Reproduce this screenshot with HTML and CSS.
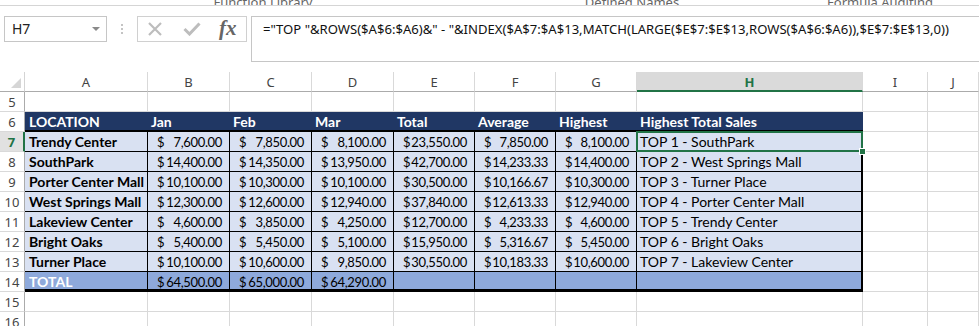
FILE: index.html
```html
<!DOCTYPE html>
<html lang="en">
<head>
    <meta charset="UTF-8">
    <title>Highest Total Sales</title>
    <link rel="stylesheet" href="styles.css">
</head>
<body>

    <!-- Ribbon group labels (cut off at the top) -->
    <div class="ribbon">
        <span class="group g1">Function Library</span>
        <span class="group g2">Defined Names</span>
        <span class="group g3">Formula Auditing</span>
    </div>

    <!-- Formula bar -->
    <div class="formula-bar">
        <div class="name-box">H7<span class="arrow"></span></div>
        <div class="grip"></div>
        <div class="fn-box">
            <svg class="ico" width="16" height="16" viewBox="0 0 16 16"><path d="M2 2L14 14M14 2L2 14" stroke="#bdbdbd" stroke-width="2.2" fill="none"/></svg>
            <svg class="ico" width="18" height="14" viewBox="0 0 18 14"><path d="M1.5 7L6.5 12L16.5 1.5" stroke="#bdbdbd" stroke-width="3" fill="none"/></svg>
            <span class="fx">fx</span>
        </div>
        <div class="formula">="TOP "&amp;ROWS($A$6:$A6)&amp;" - "&amp;INDEX($A$7:$A$13,MATCH(LARGE($E$7:$E$13,ROWS($A$6:$A6)),$E$7:$E$13,0))</div>
    </div>

    <!-- Worksheet -->
    <div class="sheet">
        <div class="corner"><span class="tri"></span></div>
        <div class="ch">A</div><div class="ch">B</div><div class="ch">C</div><div class="ch">D</div><div class="ch">E</div>
        <div class="ch">F</div><div class="ch">G</div><div class="ch act">H</div><div class="ch">I</div><div class="ch">J</div>

        <div class="rh">5</div>
        <div class="c"></div><div class="c"></div><div class="c"></div><div class="c"></div><div class="c"></div>
        <div class="c"></div><div class="c"></div><div class="c"></div><div class="c"></div><div class="c"></div>

        <div class="rh">6</div>
        <div class="hd first">LOCATION</div><div class="hd">Jan</div><div class="hd">Feb</div><div class="hd">Mar</div>
        <div class="hd">Total</div><div class="hd">Average</div><div class="hd">Highest</div>
        <div class="hd">Highest Total Sales</div><div class="c"></div><div class="c"></div>

        <div class="rh act">7</div>
        <div class="bd lb">Trendy Center</div>
        <div class="bd nm"><span>$</span><span>7,600.00</span></div>
        <div class="bd nm"><span>$</span><span>7,850.00</span></div>
        <div class="bd nm"><span>$</span><span>8,100.00</span></div>
        <div class="bd nm"><span>$</span><span>23,550.00</span></div>
        <div class="bd nm"><span>$</span><span>7,850.00</span></div>
        <div class="bd nm"><span>$</span><span>8,100.00</span></div>
        <div class="bd top sel">TOP 1 - SouthPark</div>
        <div class="c"></div><div class="c"></div>

        <div class="rh">8</div>
        <div class="bd lb">SouthPark</div>
        <div class="bd nm"><span>$</span><span>14,400.00</span></div>
        <div class="bd nm"><span>$</span><span>14,350.00</span></div>
        <div class="bd nm"><span>$</span><span>13,950.00</span></div>
        <div class="bd nm"><span>$</span><span>42,700.00</span></div>
        <div class="bd nm"><span>$</span><span>14,233.33</span></div>
        <div class="bd nm"><span>$</span><span>14,400.00</span></div>
        <div class="bd top">TOP 2 - West Springs Mall</div>
        <div class="c"></div><div class="c"></div>

        <div class="rh">9</div>
        <div class="bd lb">Porter Center Mall</div>
        <div class="bd nm"><span>$</span><span>10,100.00</span></div>
        <div class="bd nm"><span>$</span><span>10,300.00</span></div>
        <div class="bd nm"><span>$</span><span>10,100.00</span></div>
        <div class="bd nm"><span>$</span><span>30,500.00</span></div>
        <div class="bd nm"><span>$</span><span>10,166.67</span></div>
        <div class="bd nm"><span>$</span><span>10,300.00</span></div>
        <div class="bd top">TOP 3 - Turner Place</div>
        <div class="c"></div><div class="c"></div>

        <div class="rh">10</div>
        <div class="bd lb">West Springs Mall</div>
        <div class="bd nm"><span>$</span><span>12,300.00</span></div>
        <div class="bd nm"><span>$</span><span>12,600.00</span></div>
        <div class="bd nm"><span>$</span><span>12,940.00</span></div>
        <div class="bd nm"><span>$</span><span>37,840.00</span></div>
        <div class="bd nm"><span>$</span><span>12,613.33</span></div>
        <div class="bd nm"><span>$</span><span>12,940.00</span></div>
        <div class="bd top">TOP 4 - Porter Center Mall</div>
        <div class="c"></div><div class="c"></div>

        <div class="rh">11</div>
        <div class="bd lb">Lakeview Center</div>
        <div class="bd nm"><span>$</span><span>4,600.00</span></div>
        <div class="bd nm"><span>$</span><span>3,850.00</span></div>
        <div class="bd nm"><span>$</span><span>4,250.00</span></div>
        <div class="bd nm"><span>$</span><span>12,700.00</span></div>
        <div class="bd nm"><span>$</span><span>4,233.33</span></div>
        <div class="bd nm"><span>$</span><span>4,600.00</span></div>
        <div class="bd top">TOP 5 - Trendy Center</div>
        <div class="c"></div><div class="c"></div>

        <div class="rh">12</div>
        <div class="bd lb">Bright Oaks</div>
        <div class="bd nm"><span>$</span><span>5,400.00</span></div>
        <div class="bd nm"><span>$</span><span>5,450.00</span></div>
        <div class="bd nm"><span>$</span><span>5,100.00</span></div>
        <div class="bd nm"><span>$</span><span>15,950.00</span></div>
        <div class="bd nm"><span>$</span><span>5,316.67</span></div>
        <div class="bd nm"><span>$</span><span>5,450.00</span></div>
        <div class="bd top">TOP 6 - Bright Oaks</div>
        <div class="c"></div><div class="c"></div>

        <div class="rh">13</div>
        <div class="bd lb">Turner Place</div>
        <div class="bd nm"><span>$</span><span>10,100.00</span></div>
        <div class="bd nm"><span>$</span><span>10,600.00</span></div>
        <div class="bd nm"><span>$</span><span>9,850.00</span></div>
        <div class="bd nm"><span>$</span><span>30,550.00</span></div>
        <div class="bd nm"><span>$</span><span>10,183.33</span></div>
        <div class="bd nm"><span>$</span><span>10,600.00</span></div>
        <div class="bd top">TOP 7 - Lakeview Center</div>
        <div class="c"></div><div class="c"></div>

        <div class="rh">14</div>
        <div class="bd tt lb">TOTAL</div>
        <div class="bd tt nm"><span>$</span><span>64,500.00</span></div>
        <div class="bd tt nm"><span>$</span><span>65,000.00</span></div>
        <div class="bd tt nm"><span>$</span><span>64,290.00</span></div>
        <div class="bd tt"></div>
        <div class="bd tt"></div>
        <div class="bd tt"></div>
        <div class="bd tt top"></div>
        <div class="c"></div><div class="c"></div>

        <div class="rh">15</div>
        <div class="c"></div><div class="c"></div><div class="c"></div><div class="c"></div><div class="c"></div>
        <div class="c"></div><div class="c"></div><div class="c"></div><div class="c"></div><div class="c"></div>

        <div class="rh">16</div>
        <div class="c"></div><div class="c"></div><div class="c"></div><div class="c"></div><div class="c"></div>
        <div class="c"></div><div class="c"></div><div class="c"></div><div class="c"></div><div class="c"></div>
    </div>

</body>
</html>
```

FILE: styles.css
```css
body {
    margin: 0;
    background-color: #fff;
    font-family: "Noto Sans", Arial, sans-serif;
    overflow: hidden;
}
/* Ribbon */
.ribbon {
    height: 5px;
    overflow: hidden;
    border-bottom: 1px solid #d5d5d5;
    display: flex;
    align-items: flex-end;
    font-size: 13px;
    color: #666;
}
.group {
    width: 126px;
    text-align: center;
    line-height: 12px;
    margin-bottom: -3px;
    white-space: nowrap;
}
.g1 { margin-left: 200px; }
.g2 { margin-left: 243px; }
.g3 { margin-left: 122px; }
/* Formula bar */
.formula-bar {
    display: flex;
    align-items: flex-start;
    margin-top: 10px;
    padding-left: 4px;
}
.name-box {
    box-sizing: border-box;
    width: 103px;
    height: 26px;
    border: 1px solid #c6c6c6;
    font-size: 14px;
    line-height: 24px;
    padding-left: 7px;
    color: #222;
    position: relative;
}
.arrow {
    position: absolute;
    right: 6px;
    top: 10px;
    border-left: 4px solid transparent;
    border-right: 4px solid transparent;
    border-top: 4px solid #8a8a8a;
}
.grip {
    width: 0;
    height: 10px;
    margin: 8px 14px 0 14px;
    border-left: 2px dotted #c4c4c4;
}
.fn-box {
    box-sizing: border-box;
    width: 110px;
    height: 26px;
    border: 1px solid #d0d0d0;
    display: flex;
    align-items: center;
    padding-left: 9px;
    gap: 20px;
}
.ico {
    display: block;
}
.fx {
    font-family: "Liberation Serif", serif;
    font-style: italic;
    font-weight: bold;
    font-size: 21px;
    color: #666;
    margin-left: -2px;
    margin-top: -2px;
}
.formula {
    flex-grow: 1;
    box-sizing: border-box;
    height: 46px;
    margin-left: 4px;
    border: 1px solid #c6c6c6;
    border-right: none;
    padding: 2px 0 0 11px;
    font-size: 13.1px;
    line-height: 20px;
    color: #111;
    white-space: nowrap;
    overflow: hidden;
}
/* Worksheet */
.sheet {
    display: grid;
    grid-template-columns: 25px 123px 82px 82px 82px 81px 81px 81px 226px 65px 1fr;
    grid-auto-rows: 20px;
    margin-top: 10px;
    font-family: Lato, "Liberation Sans", sans-serif;
    font-size: 14px;
}
.sheet > div {
    box-sizing: border-box;
    line-height: 20px;
    white-space: nowrap;
}
.corner {
    border-right: 1px solid #d4d4d4;
    border-bottom: 1px solid #ababab;
    position: relative;
}
.tri {
    position: absolute;
    right: 3px;
    bottom: 3px;
    border-left: 10px solid transparent;
    border-bottom: 10px solid #d6d6d6;
}
.ch {
    font-family: "Noto Sans", sans-serif;
    font-size: 13px;
    color: #444;
    text-align: center;
    border-right: 1px solid #d9d9d9;
    border-bottom: 1px solid #ababab;
}
.ch.act {
    background-color: #dadada;
    color: #217346;
    font-weight: bold;
    border-bottom: 2px solid #217346;
}
.rh {
    font-family: "Noto Sans", sans-serif;
    font-size: 13px;
    color: #444;
    text-align: center;
    border-right: 1px solid #ababab;
    border-bottom: 1px solid #d9d9d9;
}
.rh.act {
    background-color: #e1e1e1;
    color: #217346;
    font-weight: bold;
    border-right: 2px solid #217346;
}
.c {
    border-right: 1px solid #d9d9d9;
    border-bottom: 1px solid #d9d9d9;
}
.hd {
    background-color: #203764;
    color: #fff;
    font-weight: bold;
    padding-left: 3px;
    border-bottom: 2px solid #000;
}
.hd.first {
    padding-left: 4px;
}
.bd {
    background-color: #d9e1f2;
    color: #000;
    padding-left: 3px;
    border-right: 1px solid #000;
    border-bottom: 1px solid #000;
}
.lb {
    font-weight: bold;
    padding-left: 4px;
}
.nm {
    display: flex;
    justify-content: space-between;
    padding: 0 7px 0 9px;
    font-size: 13px;
    letter-spacing: -0.35px;
}
.top {
    border-right: 2px solid #000;
}
.tt {
    background-color: #8ea9db;
    border-bottom: 3px solid #000;
}
.tt.lb {
    color: #fff;
}
.sel {
    position: relative;
}
.sel::after {
    content: '';
    position: absolute;
    top: -1px;
    left: -1px;
    right: -2px;
    bottom: -1px;
    border: 2px solid #217346;
}
.sel::before {
    content: '';
    position: absolute;
    right: -5px;
    bottom: -4px;
    width: 5px;
    height: 5px;
    background-color: #217346;
    border: 1px solid #fff;
    z-index: 1;
}
```
